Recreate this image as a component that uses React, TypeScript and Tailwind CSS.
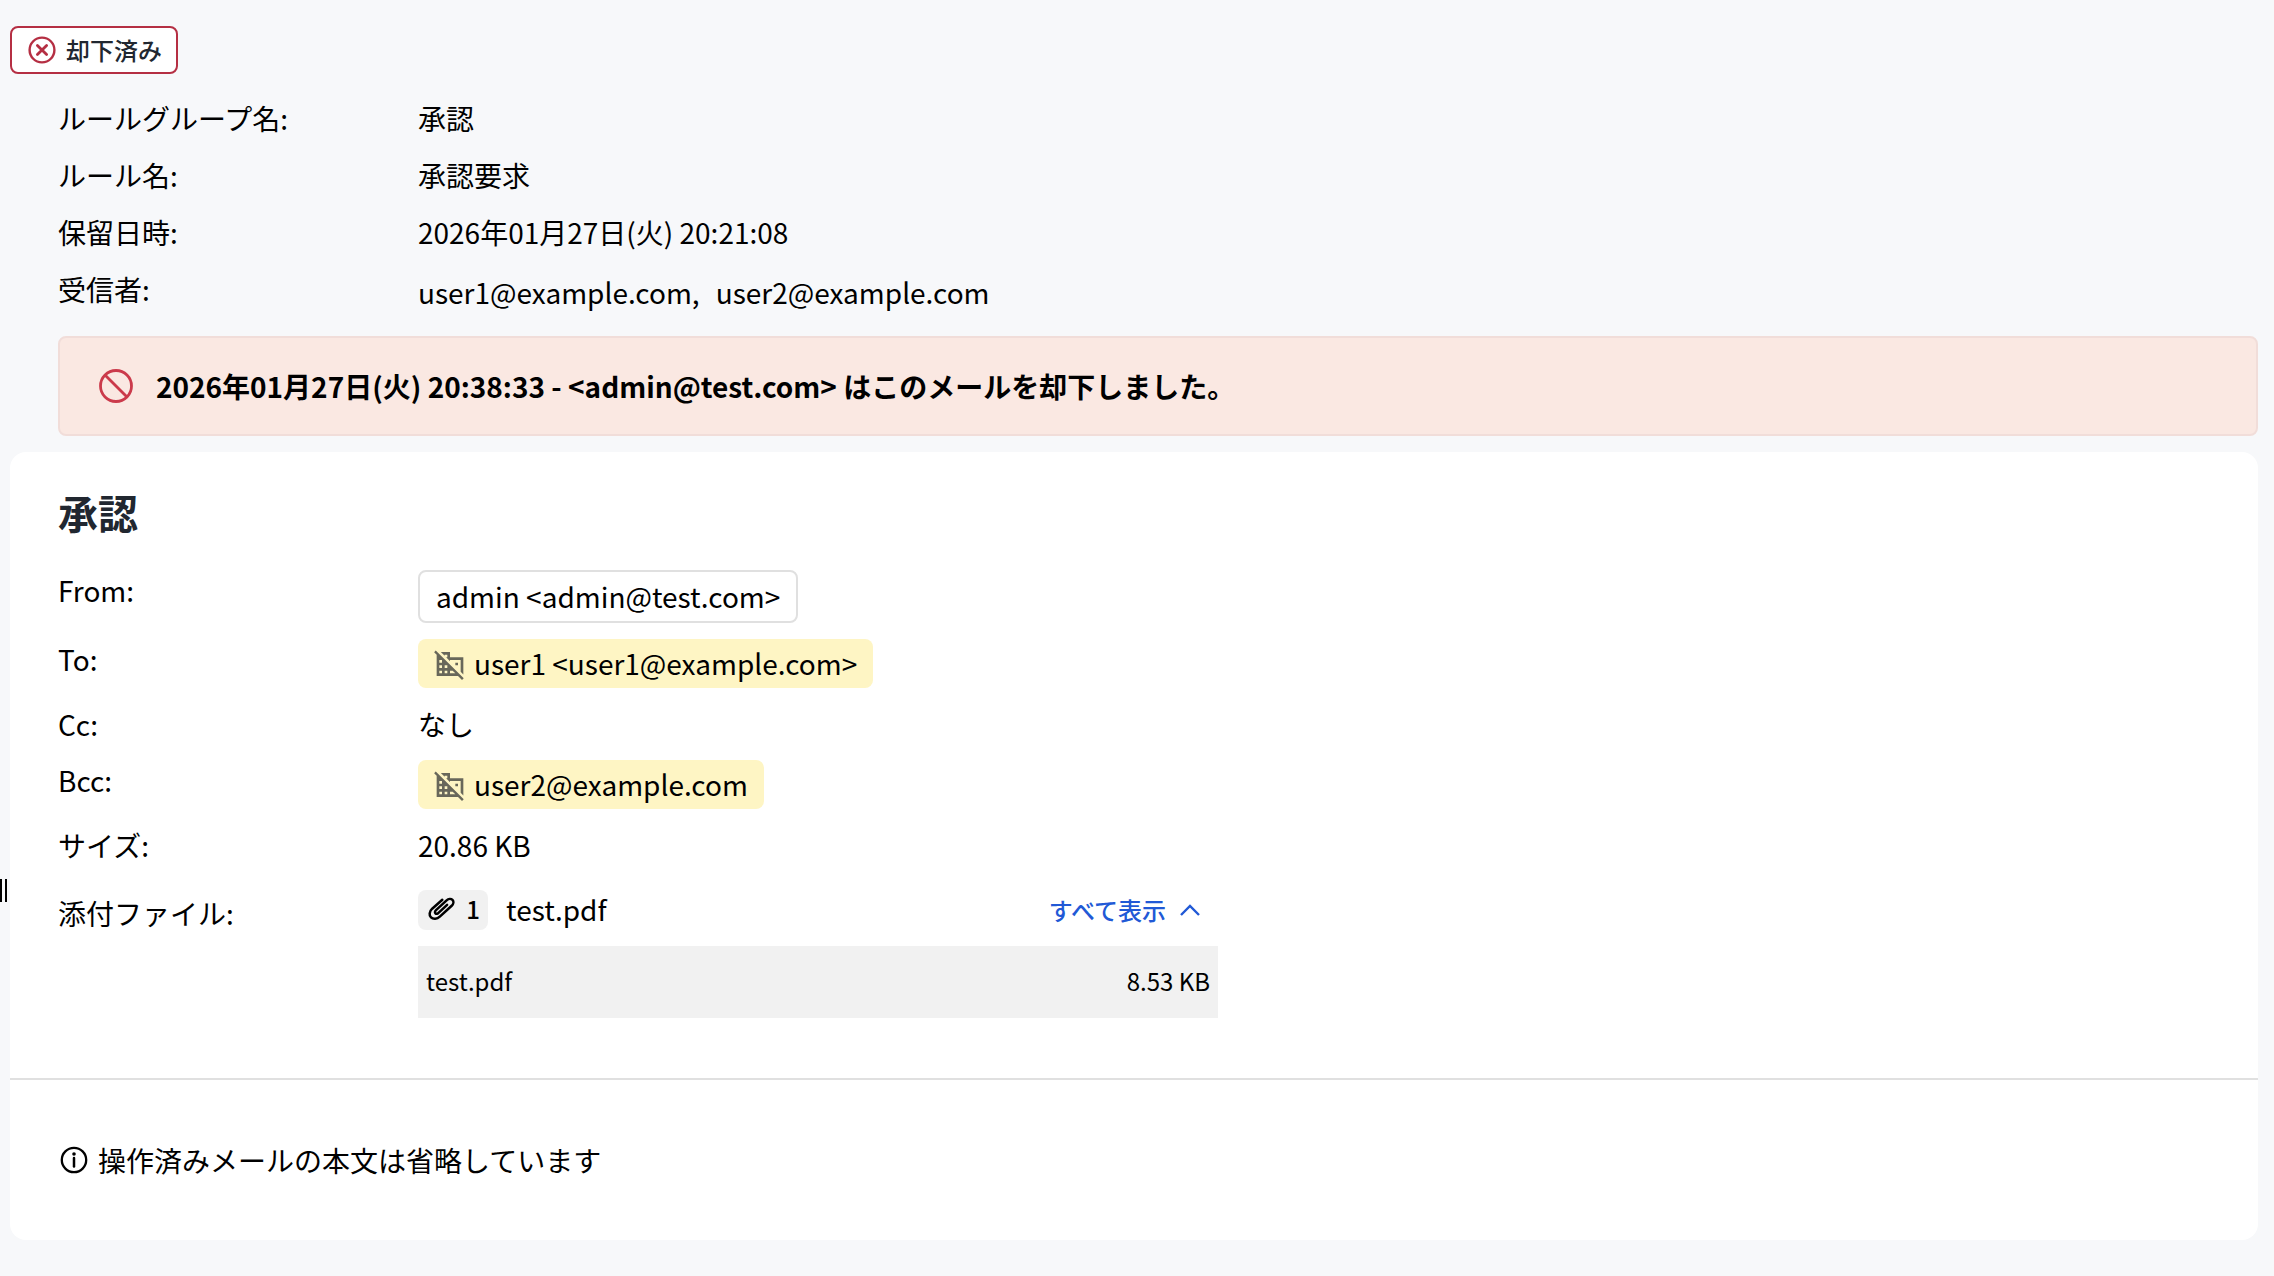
import type { ReactNode } from "react";
import { MdDomainDisabled } from "react-icons/md";

const RULE_INFO = [
  { label: "ルールグループ名:", value: "承認" },
  { label: "ルール名:", value: "承認要求" },
  { label: "保留日時:", value: "2026年01月27日(火) 20:21:08" },
];

const ATTACHMENTS = [{ name: "test.pdf", size: "8.53 KB" }];

function CircleX() {
  return (
    <svg width="28" height="28" viewBox="0 0 28 28" fill="none" stroke="#b52f43" className="shrink-0">
      <circle cx="14" cy="14" r="12.4" strokeWidth="2.4" />
      <path d="M9.4 9.4l9.2 9.2M18.6 9.4l-9.2 9.2" strokeWidth="2.8" strokeLinecap="round" />
    </svg>
  );
}

function Ban() {
  return (
    <svg width="34" height="34" viewBox="0 0 34 34" fill="none" stroke="#cb3a4b" strokeWidth="2.8" className="shrink-0">
      <circle cx="17" cy="17" r="15.5" />
      <path d="M6 6l22 22" />
    </svg>
  );
}

function Paperclip() {
  return (
    <svg width="28" height="24" viewBox="0 0 28 24" fill="none" stroke="#000" strokeWidth="2.5" strokeLinecap="round" className="shrink-0">
      <path d="M14.3 2.8L4.2 11.7c-3 2.8-3.3 6.6-1.2 8.7 2.2 2.2 6 1.9 8.8-.8l11.9-10.8c2-1.9 2.2-4.4.8-5.9-1.5-1.5-4-1.3-5.9.5L8 13.2c-1.2 1.1-1.3 2.4-.6 3.1.8.8 2 .6 3.1-.5l8.6-7.9" />
    </svg>
  );
}

function Info() {
  return (
    <svg width="28" height="28" viewBox="0 0 28 28" fill="none" stroke="#000" className="shrink-0">
      <circle cx="14" cy="14" r="12.2" strokeWidth="2.3" />
      <path d="M14 12v8.5" strokeWidth="2.5" strokeLinecap="round" />
      <circle cx="14" cy="8" r="1.8" fill="#000" stroke="none" />
    </svg>
  );
}

function Row({ label, className, children }: { label: string; className: string; children: ReactNode }) {
  return (
    <div className={`flex ${className}`}>
      <dt className="w-[360px] shrink-0">{label}</dt>
      <dd className="min-w-0">{children}</dd>
    </div>
  );
}

function ExternalAddress({ children }: { children: ReactNode }) {
  return (
    <span className="flex h-[49px] items-center gap-2 rounded-lg bg-[#fef5c4] px-4">
      <MdDomainDisabled size={32} color="#68675a" className="shrink-0" />
      <span className="pb-[2px]">{children}</span>
    </span>
  );
}

export default function App() {
  return (
    <main
      lang="ja"
      className="relative min-h-screen bg-[#f7f8fa] pt-[26px] pr-4 pb-9 pl-[10px] font-['Noto_Sans_CJK_JP',sans-serif] text-[28px] leading-[40px] text-black"
    >
      {/* pane resize handle */}
      <div className="absolute top-[879px] left-0 flex h-[23px] w-[7px] justify-between">
        <span className="w-[2px] bg-black" />
        <span className="w-[2px] bg-black" />
      </div>

      <div className="flex h-12 w-[168px] items-center gap-[10px] rounded-lg border-2 border-[#b52f43] bg-white pl-4 text-2xl font-medium text-[#212730]">
        <CircleX />
        却下済み
      </div>

      <dl className="pt-6 pl-12">
        {RULE_INFO.map((r) => (
          <Row key={r.label} label={r.label} className="h-[57px]">
            {r.value}
          </Row>
        ))}
        <Row label="受信者:" className="h-[67px]">
          <span className="flex gap-4 pt-[3px]">
            <span>user1@example.com,</span>
            <span>user2@example.com</span>
          </span>
        </Row>
      </dl>

      <div className="ml-12 flex h-[100px] items-center gap-[23px] rounded-lg border-2 border-[#f1ddd9] bg-[#fae8e2] pl-[39px] font-bold">
        <Ban />
        <p>2026年01月27日(火) 20:38:33 - &lt;admin@test.com&gt; はこのメールを却下しました。</p>
      </div>

      <article className="mt-4 rounded-2xl bg-white">
        <section className="border-b-2 border-[#e0e0e0] px-12 pt-8 pb-[60px]">
          <h1 className="text-[40px] leading-[56px] font-bold text-[#212730]">承認</h1>

          <dl className="pt-[30px]">
            <Row label="From:" className="h-[69px]">
              <span className="flex h-[53px] items-center rounded-lg border-2 border-[#e0e0e0] px-4 pb-[2px]">
                admin &lt;admin@test.com&gt;
              </span>
            </Row>
            <Row label="To:" className="h-[65px]">
              <ExternalAddress>user1 &lt;user1@example.com&gt;</ExternalAddress>
            </Row>
            <Row label="Cc:" className="h-14">
              なし
            </Row>
            <Row label="Bcc:" className="h-[65px]">
              <ExternalAddress>user2@example.com</ExternalAddress>
            </Row>
            <Row label="サイズ:" className="h-[65px]">
              20.86 KB
            </Row>
            <Row label="添付ファイル:" className="[&>dt]:pt-[3px]">
              <div className="flex w-[800px] flex-col gap-4">
                <div className="flex h-10 items-center">
                  <span className="flex h-10 w-[70px] items-center justify-end gap-[10px] rounded-lg bg-[#f1f1f1] pr-2 pb-[2px] text-2xl font-medium">
                    <Paperclip />1
                  </span>
                  <span className="pb-[2px] pl-[18px]">test.pdf</span>
                  <button type="button" className="ml-auto flex items-center gap-[14px] pr-[18px] text-2xl font-medium text-[#2159d6]">
                    すべて表示
                    <svg width="20" height="12" viewBox="0 0 20 12" fill="none" stroke="currentColor" strokeWidth="2.4">
                      <path d="M1 11l9-9 9 9" />
                    </svg>
                  </button>
                </div>
                <ul>
                  {ATTACHMENTS.map((file) => (
                    <li key={file.name} className="flex h-[72px] items-center justify-between bg-[#f1f1f1] px-2 pb-[2px] text-2xl">
                      <span>{file.name}</span>
                      <span>{file.size}</span>
                    </li>
                  ))}
                </ul>
              </div>
            </Row>
          </dl>
        </section>

        <section className="flex h-40 items-center gap-[10px] px-[50px]">
          <Info />
          <p>操作済みメールの本文は省略しています</p>
        </section>
      </article>
    </main>
  );
}
